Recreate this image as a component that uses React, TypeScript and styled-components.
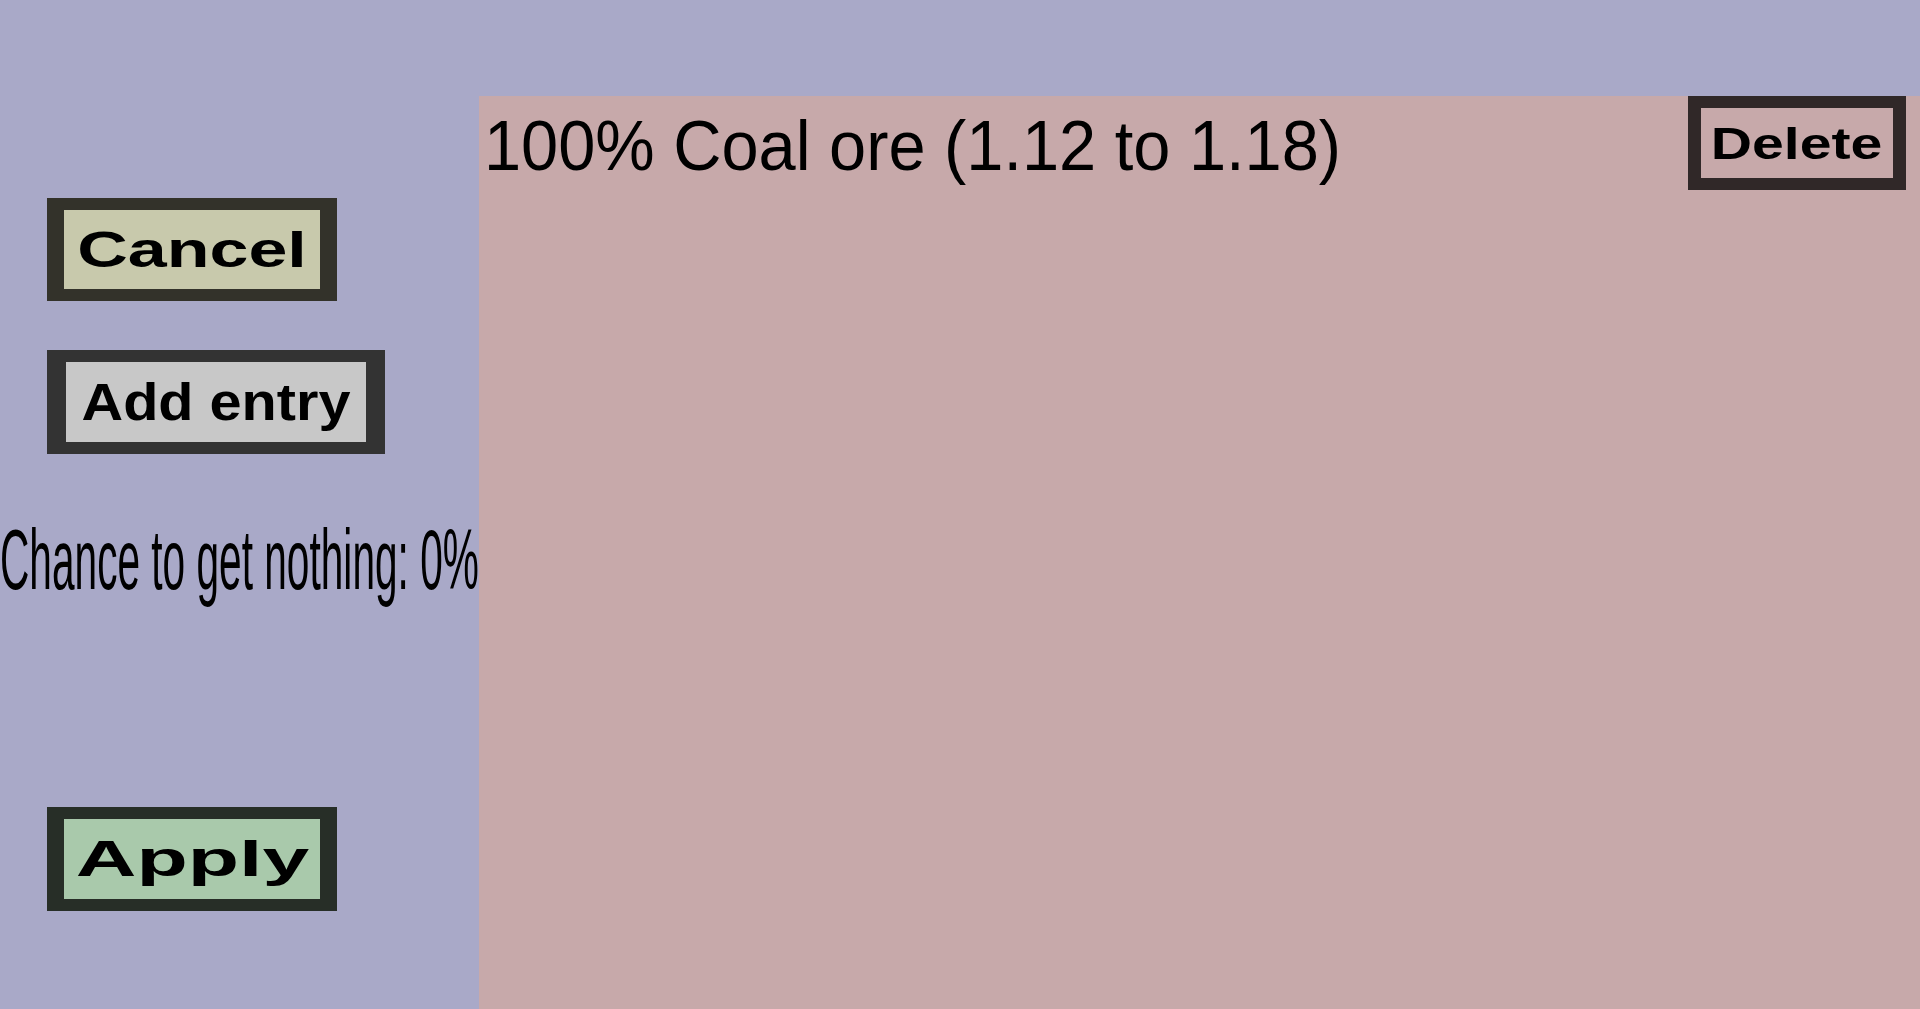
import React from 'react';
import styled, { createGlobalStyle } from 'styled-components';

const GlobalStyle = createGlobalStyle`
  html, body {
    margin: 0;
    padding: 0;
    height: 100%;
    background: #a9a9c8;
    overflow: hidden;
  }
  body {
    font-family: 'Liberation Sans', Arial, sans-serif;
    color: #000;
  }
`;

const Screen = styled.div`
  display: flex;
  width: 1920px;
  height: 1009px;
  background: #a9a9c8;
`;

const Sidebar = styled.div`
  display: flex;
  flex-direction: column;
  align-items: flex-start;
  width: 479px;
  flex-shrink: 0;
  padding-top: 198px;
  box-sizing: border-box;
`;

const Button = styled.button<{
  $w: number;
  $h: number;
  $fill: string;
  $edge: string;
  $by?: number;
  $bx?: number;
  $top?: number;
  $left?: number;
}>`
  display: flex;
  align-items: center;
  justify-content: center;
  box-sizing: border-box;
  width: ${(p) => p.$w}px;
  height: ${(p) => p.$h}px;
  margin: ${(p) => p.$top ?? 0}px 0 0 ${(p) => p.$left ?? 0}px;
  padding: 0;
  background: ${(p) => p.$fill};
  border-style: solid;
  border-color: ${(p) => p.$edge};
  border-width: ${(p) => p.$by ?? 12}px ${(p) => p.$bx ?? 17}px;
  border-radius: 0;
  cursor: pointer;
  overflow: visible;
  flex-shrink: 0;
`;

const ButtonText = styled.span<{ $size: number; $stretch: number }>`
  display: inline-block;
  font-family: 'Liberation Sans', Arial, sans-serif;
  font-weight: 700;
  font-size: ${(p) => p.$size}px;
  line-height: 1;
  color: #000;
  white-space: nowrap;
  transform: scaleX(${(p) => p.$stretch});
  transform-origin: center;
`;

const Squeezed = styled.span<{ $size: number; $stretch: number; $top?: number; $left?: number }>`
  display: inline-block;
  margin: ${(p) => p.$top ?? 0}px 0 0 ${(p) => p.$left ?? 0}px;
  font-family: 'Liberation Sans', Arial, sans-serif;
  font-size: ${(p) => p.$size}px;
  line-height: 1;
  white-space: nowrap;
  transform: scaleX(${(p) => p.$stretch});
  transform-origin: left center;
`;

const Panel = styled.div`
  flex: 1;
  margin-top: 96px;
  height: 913px;
  background: #c7a9aa;
  padding-right: 14px;
  box-sizing: border-box;
`;

const EntryRow = styled.div`
  display: flex;
  justify-content: space-between;
  align-items: flex-start;
`;

const entries = [{ chance: 100, name: 'Coal ore', min: 1.12, max: 1.18 }];

const App = () => {
  return (
    <>
      <GlobalStyle />
      <Screen>
        <Sidebar>
          <Button $w={290} $h={103} $left={47} $fill="#c8c9ac" $edge="#33322a">
            <ButtonText $size={50} $stretch={1.4}>Cancel</ButtonText>
          </Button>
          <Button
            $w={338}
            $h={104}
            $left={47}
            $top={49}
            $bx={19}
            $fill="#c8c8c8"
            $edge="#333333"
          >
            <ButtonText $size={51} $stretch={1.13}>Add entry</ButtonText>
          </Button>
          <Squeezed $size={85} $stretch={0.478} $top={63}>
            Chance to get nothing: 0%
          </Squeezed>
          <Button $w={290} $h={104} $left={47} $top={205} $fill="#a9c9ab" $edge="#272e27">
            <ButtonText $size={50} $stretch={1.68}>Apply</ButtonText>
          </Button>
        </Sidebar>
        <Panel>
          {entries.map((entry, i) => {
            return (
              <EntryRow key={i}>
                <Squeezed $size={71} $stretch={0.94} $top={14} $left={5}>
                  {entry.chance}% {entry.name} ({entry.min.toFixed(2)} to {entry.max.toFixed(2)})
                </Squeezed>
                <Button $w={218} $h={94} $by={12} $bx={13} $fill="#c7a9aa" $edge="#302828">
                  <ButtonText $size={45} $stretch={1.27}>Delete</ButtonText>
                </Button>
              </EntryRow>
            );
          })}
        </Panel>
      </Screen>
    </>
  );
};

export default App;
